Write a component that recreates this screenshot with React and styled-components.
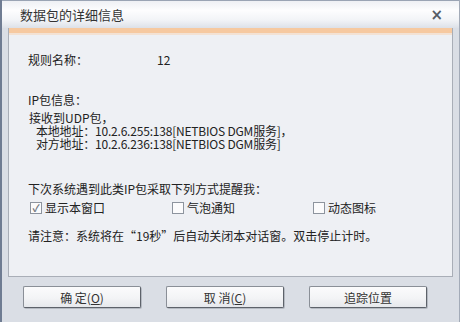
import React from "react";
import styled, { createGlobalStyle } from "styled-components";

const Global = createGlobalStyle`
  body {
    margin: 0;
    font-family: "Noto Sans CJK SC", "DejaVu Sans", sans-serif;
    font-size: 12px;
    color: #222;
  }
`;

const App = () => {
    return (
        <>
            <Global />
            <Window>
                <TitleBar>
                    <span>数据包的详细信息</span>
                    <Close>×</Close>
                </TitleBar>
                <Panel>
                    <Line $top={25}>
                        <span>规则名称：</span>
                        <Value>12</Value>
                    </Line>
                    <Line $top={26}>IP包信息：</Line>
                    <Info>
                        <div>接收到UDP包，</div>
                        <div className="sub">本地地址：10.2.6.255:138[NETBIOS DGM服务]，</div>
                        <div className="sub">对方地址：10.2.6.236:138[NETBIOS DGM服务]</div>
                    </Info>
                    <Line $top={32}>下次系统遇到此类IP包采取下列方式提醒我：</Line>
                    <Checks>
                        <Check><Box $checked>✓</Box>显示本窗口</Check>
                        <Check><Box />气泡通知</Check>
                        <Check><Box />动态图标</Check>
                    </Checks>
                    <Line $top={14}>请注意：系统将在“19秒”后自动关闭本对话窗。双击停止计时。</Line>
                </Panel>
                <Buttons>
                    <Button>确 定(<u>O</u>)</Button>
                    <Button>取 消(<u>C</u>)</Button>
                    <Button>追踪位置</Button>
                </Buttons>
            </Window>
        </>
    );
};

export default App;

const Window = styled.div`
    width: 460px;
    height: 322px;
    box-sizing: border-box;
    background: #dadee5;
    border-left: 2px solid #6f7c92;
    border-right: 1px solid #a3abb8;
    display: flex;
    flex-direction: column;
`;

const TitleBar = styled.div`
    height: 27px;
    flex: none;
    display: flex;
    align-items: center;
    justify-content: space-between;
    padding: 0 16px 0 18px;
    background: linear-gradient(#eef0f4 0%, #fdfdfe 35%, #f2f4f7 70%, #dde1e8 100%);
    border-top: 1px solid #9aa4b4;
    font-size: 13px;
    color: #333;
`;

const Close = styled.span`
    font-family: "DejaVu Sans", sans-serif;
    font-size: 15px;
    font-weight: bold;
    color: #555c66;
`;

const Panel = styled.div`
    margin: 0 6px;
    height: 249px;
    box-sizing: border-box;
    background: #eef0f4;
    border: 1px solid #a9aeb7;
    border-top: none;
    box-shadow: inset 0 5px 0 #f6c9a0, inset 0 7px 0 #f3e2d4;
    padding: 0 0 0 19px;
`;

const Line = styled.div`
    margin-top: ${p => p.$top}px;
    line-height: 14px;
    display: flex;
`;

const Value = styled.span`
    margin-left: 69px;
`;

const Info = styled.div`
    margin-top: 4px;
    margin-left: 1px;
    line-height: 13px;
    .sub {
        padding-left: 7px;
        letter-spacing: -0.2px;
    }
`;

const Checks = styled.div`
    margin-top: 5px;
    margin-left: 2px;
    display: grid;
    grid-template-columns: 142px 141px auto;
    line-height: 14px;
`;

const Check = styled.div`
    display: flex;
    align-items: center;
    gap: 3px;
`;

const Box = styled.span`
    width: 12px;
    height: 12px;
    box-sizing: border-box;
    border: 1px solid #8d949e;
    background: #fbfbfc;
    display: inline-flex;
    align-items: center;
    justify-content: center;
    font-size: 10px;
    color: #6d737b;
    font-weight: bold;
    line-height: 1;
`;

const Buttons = styled.div`
    display: flex;
    gap: 25px;
    padding: 9px 0 0 21px;
`;

const Button = styled.button`
    width: 118px;
    height: 22px;
    padding: 0;
    font-family: inherit;
    font-size: 12px;
    color: #333;
    border: 1px solid #8a8f97;
    border-right-color: #5d626a;
    border-bottom-color: #5d626a;
    border-radius: 2px;
    background: linear-gradient(#fbfbfc 0%, #f3f4f6 55%, #e6e8ec 100%);
    box-shadow: 1px 1px 0 #b5bac2;
`;
